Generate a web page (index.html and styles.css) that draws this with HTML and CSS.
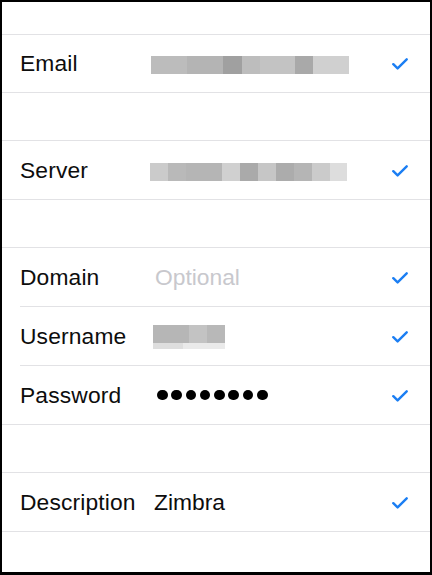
FILE: index.html
```html
<!DOCTYPE html>
<html>
<head>
<meta charset="utf-8">
<link rel="stylesheet" href="styles.css">
</head>
<body>
<div class="frame">
  <div class="top-space"></div>

  <div class="section">
    <div class="row row-short">
      <span class="label">Email</span>
      <span class="value"><span class="blur blur-email"></span></span>
      <svg class="check" viewBox="0 0 16 12" width="16" height="12"><path d="M1.3 6.2 L5.6 10.4 L14.7 1.3"/></svg>
    </div>
  </div>

  <div class="section">
    <div class="row">
      <span class="label">Server</span>
      <span class="value"><span class="blur blur-server"></span></span>
      <svg class="check" viewBox="0 0 16 12" width="16" height="12"><path d="M1.3 6.2 L5.6 10.4 L14.7 1.3"/></svg>
    </div>
  </div>

  <div class="section">
    <div class="row">
      <span class="label">Domain</span>
      <span class="value placeholder">Optional</span>
      <svg class="check" viewBox="0 0 16 12" width="16" height="12"><path d="M1.3 6.2 L5.6 10.4 L14.7 1.3"/></svg>
    </div>
    <div class="row">
      <span class="label">Username</span>
      <span class="value"><span class="blur blur-user"></span></span>
      <svg class="check" viewBox="0 0 16 12" width="16" height="12"><path d="M1.3 6.2 L5.6 10.4 L14.7 1.3"/></svg>
    </div>
    <div class="row">
      <span class="label">Password</span>
      <span class="value dots" aria-label="password">
        <i class="dot"></i><i class="dot"></i><i class="dot"></i><i class="dot"></i><i class="dot"></i><i class="dot"></i><i class="dot"></i><i class="dot"></i>
      </span>
      <svg class="check" viewBox="0 0 16 12" width="16" height="12"><path d="M1.3 6.2 L5.6 10.4 L14.7 1.3"/></svg>
    </div>
  </div>

  <div class="section">
    <div class="row">
      <span class="label">Description</span>
      <span class="value text">Zimbra</span>
      <svg class="check" viewBox="0 0 16 12" width="16" height="12"><path d="M1.3 6.2 L5.6 10.4 L14.7 1.3"/></svg>
    </div>
  </div>
</div>
</body>
</html>
```

FILE: styles.css
```css
html, body {
  margin: 0;
  padding: 0;
  background: #000;
}

.frame {
  box-sizing: border-box;
  width: 432px;
  height: 575px;
  border: 2px solid #000;
  border-bottom-width: 3px;
  background: #fff;
  overflow: hidden;
  font-family: "Liberation Sans", Arial, sans-serif;
  color: #0d0d0d;
}

.top-space {
  height: 32px;
}

.section {
  border-top: 1px solid #e2e2e5;
  border-bottom: 1px solid #e2e2e5;
  margin-bottom: 47px;
}

.row {
  display: flex;
  align-items: center;
  height: 58px;
  margin-left: 18px;
  padding-right: 22px;
}

.row-short {
  height: 57px;
}

.row + .row {
  border-top: 1px solid #e2e2e5;
}

.label {
  width: 130px;
  flex: none;
  font-size: 22.8px;
  letter-spacing: 0.15px;
}

.value {
  flex: 1;
  display: flex;
  align-items: center;
  font-size: 22.8px;
}

.placeholder {
  color: #c8c8cd;
  padding-left: 5px;
}

.text {
  padding-left: 4px;
}

.blur {
  display: block;
}

.blur-email {
  width: 198px;
  height: 18px;
  margin-top: 2px;
  margin-left: 1px;
  background: linear-gradient(to right,
    #bcbcbc 0 36px, #b4b4b4 36px 72px, #a0a0a0 72px 91px,
    #bdbdbd 91px 109px, #c3c3c3 109px 144px, #a9a9a9 144px 162px,
    #d0d0d0 162px 198px);
}

.blur-server {
  width: 197px;
  height: 18px;
  margin-top: 3px;
  background: linear-gradient(to right,
    #cbcbcb 0 18px, #b9b9b9 18px 36px, #b5b5b5 36px 72px,
    #d0d0d0 72px 90px, #aaaaaa 90px 108px, #c6c6c6 108px 126px,
    #acacac 126px 144px, #b5b5b5 144px 162px, #cbcbcb 162px 180px,
    #dddddd 180px 197px);
}

.blur-user {
  width: 72px;
  height: 24px;
  margin-left: 3px;
  margin-top: 1px;
  background:
    linear-gradient(to right, #b6b6b6 0 36px, #c3c3c3 36px 54px, #b8b8b8 54px 72px) top / 72px 18px no-repeat,
    linear-gradient(to right, #dedede 0 30px, #eaeaea 30px 72px) bottom / 72px 6px no-repeat;
}

.dots {
  gap: 3.8px;
  padding-left: 7px;
}

.dot {
  display: block;
  width: 10.5px;
  height: 10.5px;
  border-radius: 50%;
  background: #000;
}

.check {
  flex: none;
  margin-top: 1px;
}

.check path {
  fill: none;
  stroke: #1b7ef3;
  stroke-width: 2.4;
  stroke-linecap: round;
  stroke-linejoin: round;
}
```
